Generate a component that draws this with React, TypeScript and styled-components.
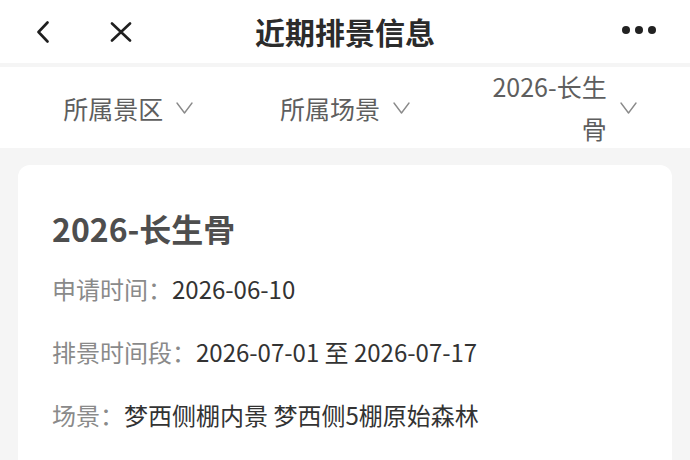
import React from "react";
import styled, { createGlobalStyle } from "styled-components";

const Global = createGlobalStyle`
  html, body { margin: 0; padding: 0; background: #f5f5f5; }
  body { font-family: "Noto Sans CJK SC", "Noto Sans", sans-serif; }
  * { box-sizing: border-box; }
`;

const Page = styled.div`
  width: 690px;
  height: 460px;
  overflow: hidden;
  background: #f5f5f5;
  display: flex;
  flex-direction: column;
`;

const Header = styled.header`
  flex-shrink: 0;
  height: 63px;
  background: #fff;
  display: grid;
  grid-template-columns: 1fr auto 1fr;
  align-items: center;
  margin-bottom: 4px;
`;

const LeftGroup = styled.div`
  display: flex;
  align-items: center;
  gap: 60px;
  padding-left: 36px;
`;

const RightGroup = styled.div`
  display: flex;
  justify-content: flex-end;
  padding-right: 34px;
`;

const Title = styled.h1`
  margin: 0;
  font-size: 30px;
  font-weight: 700;
  color: #2b2b2b;
  line-height: 1;
  padding-bottom: 2px;
`;

const IconBtn = styled.span`
  display: inline-flex;
  align-items: center;
  justify-content: center;
`;

const Dots = styled.span`
  display: inline-flex;
  gap: 5px;
  padding-bottom: 3px;
`;

const Dot = styled.span`
  width: 8px;
  height: 8px;
  border-radius: 50%;
  background: #222;
`;

const FilterBar = styled.nav`
  flex-shrink: 0;
  background: #fff;
  height: 81px;
  display: grid;
  grid-template-columns: repeat(3, 1fr);
  padding: 0 20px;
  margin-bottom: 17px;
`;

const FilterItem = styled.div`
  display: flex;
  align-items: center;
  justify-content: center;
  gap: 13px;
`;

const FilterText = styled.span<{ $wrap?: boolean }>`
  font-size: 25px;
  color: #5e5e5e;
  line-height: ${(p) => (p.$wrap ? "42px" : "1.2")};
  text-align: right;
  max-width: ${(p) => (p.$wrap ? "120px" : "none")};
  margin-top: ${(p) => (p.$wrap ? "-2px" : "0")};
`;

const Card = styled.section`
  flex-shrink: 0;
  margin: 0 18px;
  background: #fff;
  border-radius: 12px;
  padding: 43px 34px 40px;
`;

const CardTitle = styled.h2`
  margin: 0 0 25px;
  font-size: 32px;
  line-height: 40px;
  font-weight: 700;
  color: #4e4e4e;
`;

const Rows = styled.div`
  display: flex;
  flex-direction: column;
  gap: 31px;
`;

const Row = styled.div`
  font-size: 24px;
  line-height: 32px;
  white-space: nowrap;
`;

const Label = styled.span`
  color: #8a8a8a;
`;

const Value = styled.span`
  color: #333;
`;

const Chevron = () => (
  <svg width="17" height="12" viewBox="0 0 17 12" fill="none">
    <path d="M1 1 L8.5 11 L16 1" stroke="#8a8a8a" strokeWidth="1.4" strokeLinecap="round" strokeLinejoin="round" />
  </svg>
);

const BackIcon = () => (
  <svg width="14" height="22" viewBox="0 0 14 22" fill="none">
    <path d="M11.5 1.5 L2.5 11 L11.5 20.5" stroke="#1f1f1f" strokeWidth="2.6" strokeLinecap="round" strokeLinejoin="round" />
  </svg>
);

const CloseIcon = () => (
  <svg width="22" height="20" viewBox="0 0 22 20" fill="none">
    <path d="M2 1.5 L20 18.5 M20 1.5 L2 18.5" stroke="#1f1f1f" strokeWidth="2.6" strokeLinecap="round" />
  </svg>
);

const filters = [
  { label: "所属景区" },
  { label: "所属场景" },
  { label: "2026-长生骨", wrap: true },
];

const rows = [
  { label: "申请时间：", value: "2026-06-10" },
  { label: "排景时间段：", value: "2026-07-01 至 2026-07-17" },
  { label: "场景：", value: "梦西侧棚内景 梦西侧5棚原始森林" },
];

export default function App() {
  return (
    <>
      <Global />
      <Page>
        <Header>
          <LeftGroup>
            <IconBtn><BackIcon /></IconBtn>
            <IconBtn><CloseIcon /></IconBtn>
          </LeftGroup>
          <Title>近期排景信息</Title>
          <RightGroup>
            <Dots>
              <Dot />
              <Dot />
              <Dot />
            </Dots>
          </RightGroup>
        </Header>
        <FilterBar>
          {filters.map((f) => (
            <FilterItem key={f.label}>
              <FilterText $wrap={f.wrap}>{f.label}</FilterText>
              <Chevron />
            </FilterItem>
          ))}
        </FilterBar>
        <Card>
          <CardTitle>2026-长生骨</CardTitle>
          <Rows>
            {rows.map((r) => (
              <Row key={r.label}>
                <Label>{r.label}</Label>
                <Value>{r.value}</Value>
              </Row>
            ))}
          </Rows>
        </Card>
      </Page>
    </>
  );
}
